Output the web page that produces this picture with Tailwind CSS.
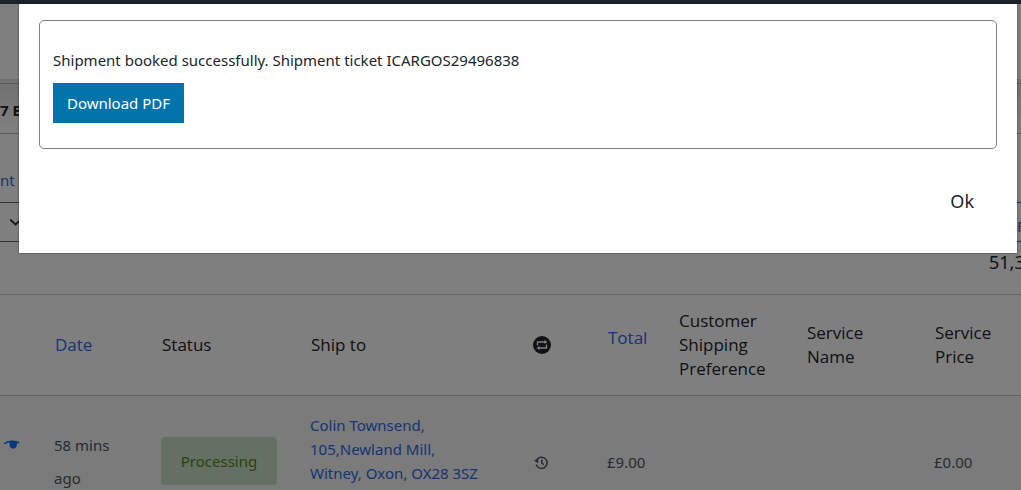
<!DOCTYPE html>
<html lang="en">
<head>
<meta charset="utf-8">
<meta name="viewport" content="width=device-width, initial-scale=1">
<title>Orders</title>
<script src="https://cdn.jsdelivr.net/npm/@tailwindcss/browser@4"></script>
</head>
<body class="h-screen overflow-hidden bg-white font-['Noto_Sans','Open_Sans',sans-serif] text-[15px] text-[#212529]">
<div class="flex h-screen flex-col overflow-hidden">
  <div class="h-1 shrink-0 bg-[#1d2327]"></div>

  <main>
    <div class="h-20 border-b border-[#b4b4b8] bg-white"><div class="h-[75px]"></div><div class="h-1 bg-[#e2e2e6]"></div></div>
    <div class="flex h-[50px] items-center border-b border-[#b8b8b8] bg-linear-to-b from-[#e4e4e6] to-white pt-1">
      <h1 class="text-[15px] font-bold whitespace-nowrap">7 Bookings</h1>
    </div>
    <nav class="flex h-[68px] items-end pb-2.5 leading-6">
      <p class="whitespace-nowrap"><a href="#" class="text-[#2a6be8]">nt</a> (4)</p>
    </nav>
    <div class="flex h-10 justify-between">
      <button type="button" aria-label="Choose a filter" class="flex w-[30px] items-center justify-end border-y border-[#6c6c70] pr-2">
        <svg class="h-3 w-3 shrink-0" viewBox="0 0 12 12" fill="none" stroke="#2c3338" stroke-width="2"><path d="M0 3.500l5.500 5 5.500-5"/></svg>
      </button>
      <button type="button" class="w-1 overflow-hidden border-y border-[#2271b1] pt-2 text-left text-[#2271b1]">Filter</button>
    </div>
    <div class="flex h-[52px] justify-end">
      <p class="w-8 pt-1.5 text-lg leading-7 whitespace-nowrap">51,388 items</p>
    </div>

    <table class="w-full table-fixed border-collapse text-left">
      <colgroup>
        <col class="w-[46px]"><col class="w-[107px]"><col class="w-[149px]"><col class="w-[216px]"><col class="w-[81px]"><col class="w-[71px]"><col class="w-[128px]"><col class="w-[128px]"><col>
      </colgroup>
      <thead class="font-['Open_Sans','Noto_Sans',sans-serif] text-[17px] leading-6">
        <tr class="h-[101px] border-y border-[#c8c8ca]">
          <th class="font-normal" aria-label="Preview"></th>
          <th class="pl-[9px] font-normal"><a href="#" class="text-[#2a6be8]">Date</a></th>
          <th class="pl-[9px] font-normal">Status</th>
          <th class="pl-[9px] font-normal">Ship to</th>
          <th class="pl-[15px] font-normal">
            <svg class="h-[18px] w-[18px]" role="img" aria-label="Shipping updates" viewBox="0 0 18 18"><circle cx="9" cy="9" r="9" fill="#212529"/><g fill="none" stroke="#fff" stroke-width="1.3"><path d="M4.500 9.500V6H12M13.500 8.500V12H6"/></g><path d="M11.500 3.900L14.400 6l-2.900 2.100zM6.500 9.900L3.600 12l2.900 2.100z" fill="#fff"/></svg>
          </th>
          <th class="pb-3.5 pl-[9px] font-normal"><a href="#" class="text-[#2a6be8]">Total</a></th>
          <th class="pl-[9px] font-normal">Customer Shipping Preference</th>
          <th class="pr-8 pl-[9px] font-normal">Service Name</th>
          <th class="pr-4 pl-[9px] font-normal">Service Price</th>
        </tr>
      </thead>
      <tbody class="bg-[#f6f6f7] align-top text-[#50575e]">
        <tr class="h-[110px]">
          <td class="pt-[43px] pl-1">
            <a href="#" aria-label="Preview order">
              <svg class="h-4 w-4" viewBox="0 0 16 16"><path d="M.3 4.800C4 1.500 11 1.400 15.300 3.800" fill="none" stroke="#0d6efd" stroke-width="1.500"/><path d="M5.500 3.500C7 2.200 11 2.200 12.800 3.500C13.500 7.500 11.500 9.500 9.200 9.500S5 7.500 5.500 3.500z" fill="#0d6efd"/></svg>
            </a>
          </td>
          <td class="pr-8 pl-2 pt-[33px] leading-[33px]">58 mins ago</td>
          <td class="pt-[41px] pl-2">
            <mark class="flex h-12 w-[116px] items-center justify-center rounded bg-[#c6e1c6] text-[#5b841b]">Processing</mark>
          </td>
          <td class="pt-[17px] pl-2 leading-6"><a href="#" class="text-[#2a6be8]">Colin Townsend,<br>105,Newland Mill,<br>Witney, Oxon, OX28 3SZ</a></td>
          <td class="pt-[59px] pl-[15px]">
            <svg class="h-4 w-4" role="img" aria-label="Shipping history" viewBox="0 0 16 16"><path d="M3.200 9.500A5.600 5.600 0 1 0 3.600 5.200M8.800 4.500V8l2 1.600" fill="none" stroke="#50575e" stroke-width="1.500"/><path d="M.8 5.500l4.700-1.700-.4 4.400z" fill="#50575e"/></svg>
          </td>
          <td class="pt-[54px] pl-2 leading-6">£9.00</td>
          <td></td>
          <td></td>
          <td class="pt-[54px] pl-2 leading-6">£0.00</td>
        </tr>
      </tbody>
    </table>
  </main>
</div>

<div class="absolute inset-x-0 top-1 bottom-0 bg-black/50"></div>

<div role="dialog" aria-modal="true" aria-label="Shipment booked" class="absolute top-1 right-1 left-[19px] bg-white px-5 pt-4 pb-8 shadow-[0_0_2px_rgba(0,0,0,0.5)]">
  <div class="rounded-[5px] border border-[#808080] px-[13px] pt-[27px] pb-[25px]">
    <p class="mb-[11px] leading-6">Shipment booked successfully. Shipment ticket ICARGOS29496838</p>
    <button type="button" class="flex h-10 w-[131px] items-center justify-center bg-[#0073aa] text-white">Download PDF</button>
  </div>
  <div class="flex justify-end pt-8">
    <button type="button" class="px-[23px] py-1.5 text-lg leading-7">Ok</button>
  </div>
</div>
</body>
</html>
